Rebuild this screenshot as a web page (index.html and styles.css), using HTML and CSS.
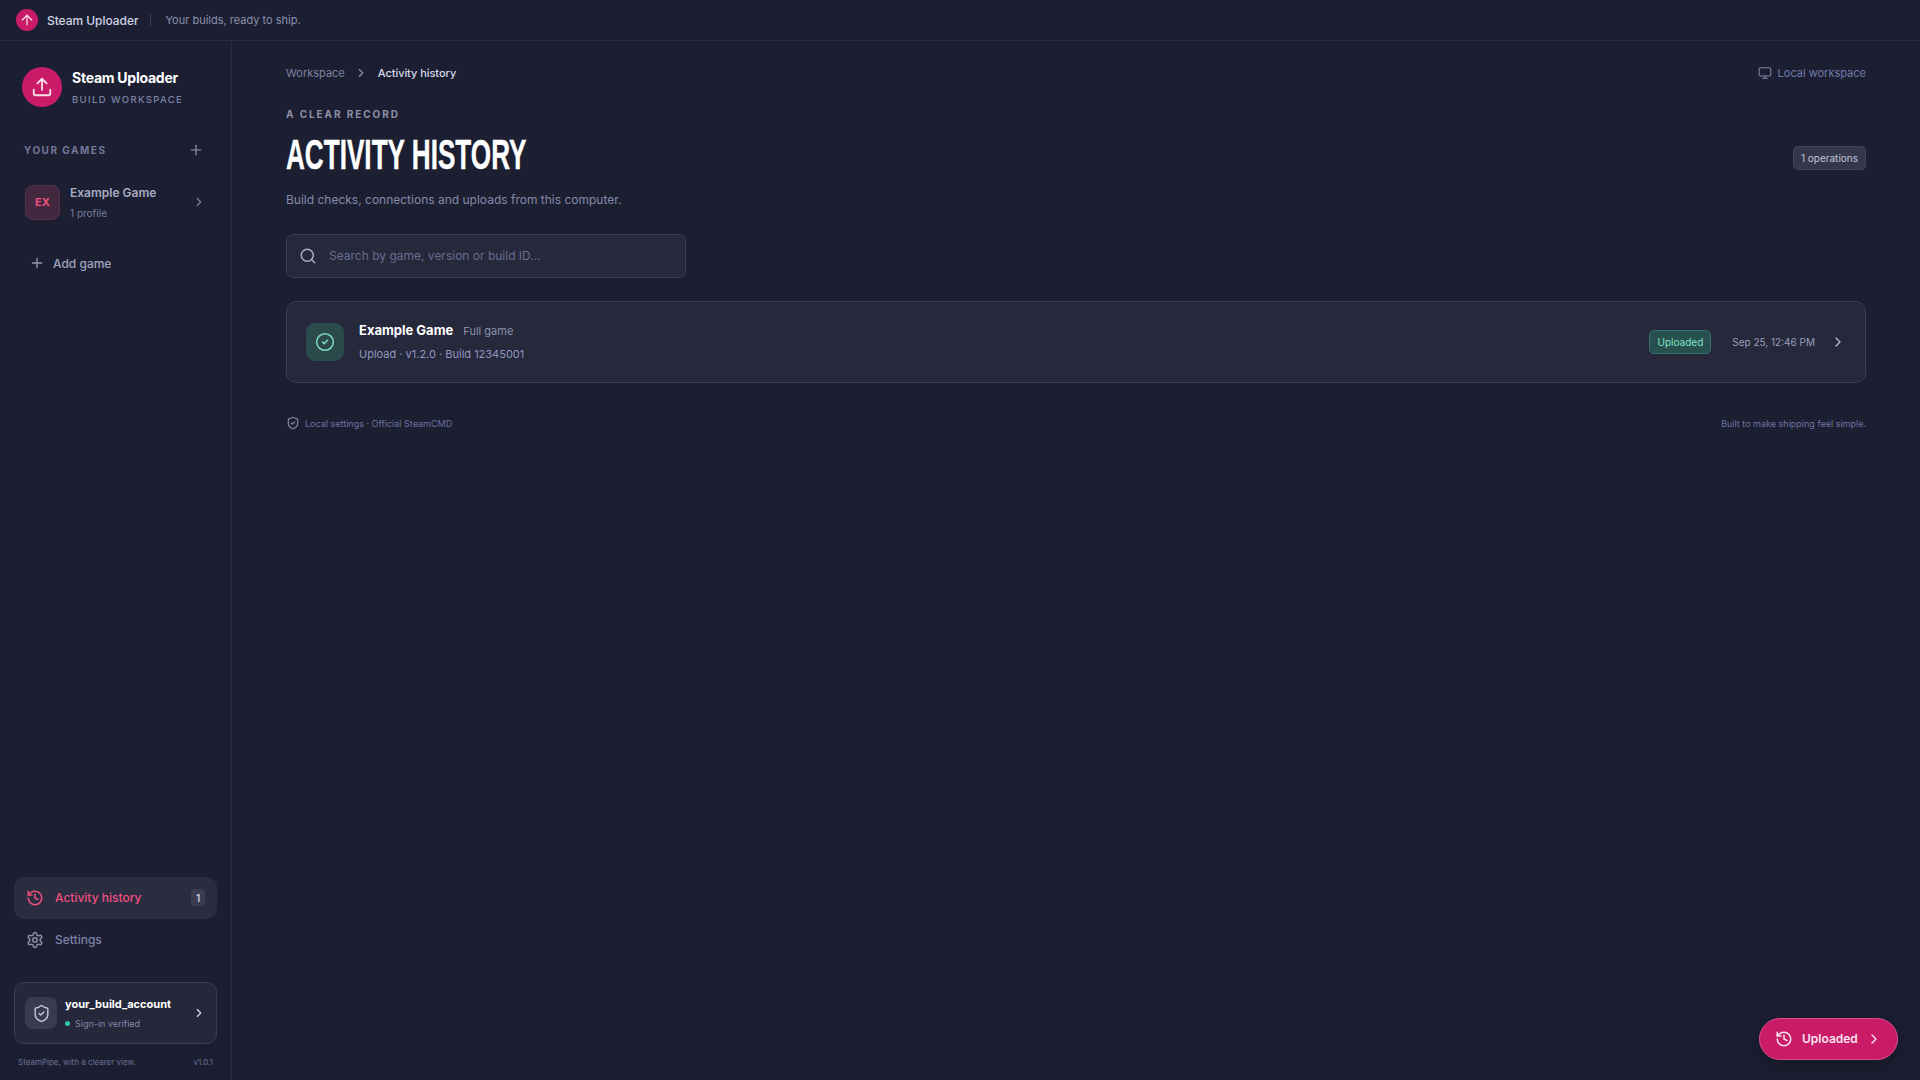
FILE: index.html
```html
<!DOCTYPE html>
<html lang="en">
<head>
<meta charset="utf-8">
<title>Steam Uploader</title>
<link rel="stylesheet" href="styles.css">
</head>
<body>
<svg class="defs" width="0" height="0" aria-hidden="true">
  <defs>
    <symbol id="i-chev" viewBox="0 0 24 24"><path d="m9 18 6-6-6-6"/></symbol>
    <symbol id="i-plus" viewBox="0 0 24 24"><path d="M5 12h14"/><path d="M12 5v14"/></symbol>
    <symbol id="i-history" viewBox="0 0 24 24"><path d="M3 12a9 9 0 1 0 9-9 9.75 9.75 0 0 0-6.74 2.74L3 8"/><path d="M3 3v5h5"/><path d="M12 7v5l4 2"/></symbol>
    <symbol id="i-shield" viewBox="0 0 24 24"><path d="M20 13c0 5-3.5 7.5-7.66 8.95a1 1 0 0 1-.67-.01C7.5 20.5 4 18 4 13V6a1 1 0 0 1 1-1c2 0 4.5-1.2 6.24-2.72a1.17 1.17 0 0 1 1.52 0C14.51 3.81 17 5 19 5a1 1 0 0 1 1 1z"/><path d="m9 12 2 2 4-4"/></symbol>
  </defs>
</svg>
<header class="topbar">
  <span class="top-logo"><svg class="ic" viewBox="0 0 24 24"><path d="m5 12 7-7 7 7"/><path d="M12 19V5"/></svg></span>
  <span class="top-name">Steam Uploader</span>
  <span class="top-sep"></span>
  <span class="top-tag">Your builds, ready to ship.</span>
</header>
<div class="shell">
  <aside class="sidebar">
    <div class="brand">
      <span class="brand-logo"><svg class="ic" viewBox="0 0 24 24"><path d="M21 15v4a2 2 0 0 1-2 2H5a2 2 0 0 1-2-2v-4"/><path d="m17 8-5-5-5 5"/><path d="M12 3v12"/></svg></span>
      <div class="brand-text">
        <div class="brand-name">Steam Uploader</div>
        <div class="brand-sub">BUILD WORKSPACE</div>
      </div>
    </div>
    <div class="games-head">
      <span class="games-title">YOUR GAMES</span>
      <svg class="ic games-plus"><use href="#i-plus"/></svg>
    </div>
    <div class="game">
      <span class="game-badge">EX</span>
      <div class="game-text">
        <div class="game-name">Example Game</div>
        <div class="game-sub">1 profile</div>
      </div>
      <svg class="ic game-chev"><use href="#i-chev"/></svg>
    </div>
    <div class="add-game">
      <svg class="ic add-plus"><use href="#i-plus"/></svg>
      <span>Add game</span>
    </div>
    <div class="spacer"></div>
    <nav class="nav">
      <div class="nav-item active">
        <svg class="ic nav-ic"><use href="#i-history"/></svg>
        <span class="nav-label">Activity history</span>
        <span class="nav-count">1</span>
      </div>
      <div class="nav-item">
        <svg class="ic nav-ic" viewBox="0 0 24 24"><path d="M12.22 2h-.44a2 2 0 0 0-2 2v.18a2 2 0 0 1-1 1.73l-.43.25a2 2 0 0 1-2 0l-.15-.08a2 2 0 0 0-2.73.73l-.22.38a2 2 0 0 0 .73 2.73l.15.1a2 2 0 0 1 1 1.72v.51a2 2 0 0 1-1 1.74l-.15.09a2 2 0 0 0-.73 2.73l.22.38a2 2 0 0 0 2.73.73l.15-.08a2 2 0 0 1 2 0l.43.25a2 2 0 0 1 1 1.73V20a2 2 0 0 0 2 2h.44a2 2 0 0 0 2-2v-.18a2 2 0 0 1 1-1.73l.43-.25a2 2 0 0 1 2 0l.15.08a2 2 0 0 0 2.73-.73l.22-.39a2 2 0 0 0-.73-2.73l-.15-.08a2 2 0 0 1-1-1.74v-.5a2 2 0 0 1 1-1.74l.15-.09a2 2 0 0 0 .73-2.73l-.22-.38a2 2 0 0 0-2.73-.73l-.15.08a2 2 0 0 1-2 0l-.43-.25a2 2 0 0 1-1-1.73V4a2 2 0 0 0-2-2z"/><circle cx="12" cy="12" r="3"/></svg>
        <span class="nav-label">Settings</span>
      </div>
    </nav>
    <div class="account">
      <span class="account-ic"><svg class="ic"><use href="#i-shield"/></svg></span>
      <div class="account-text">
        <div class="account-name">your_build_account</div>
        <div class="account-sub"><span class="dot"></span>Sign-in verified</div>
      </div>
      <svg class="ic account-chev"><use href="#i-chev"/></svg>
    </div>
    <div class="side-foot">
      <span>SteamPipe, with a clearer view.</span>
      <span>v1.0.1</span>
    </div>
  </aside>
  <main class="main">
    <div class="crumbs">
      <span class="crumb">Workspace</span>
      <svg class="ic crumb-chev"><use href="#i-chev"/></svg>
      <span class="crumb-now">Activity history</span>
      <span class="crumb-right">
        <svg class="ic monitor" viewBox="0 0 24 24"><rect width="20" height="14" x="2" y="3" rx="2"/><path d="M8 21h8"/><path d="M12 17v4"/></svg>
        Local workspace
      </span>
    </div>
    <div class="head">
      <div class="head-left">
        <div class="eyebrow">A CLEAR RECORD</div>
        <h1 class="title">ACTIVITY HISTORY</h1>
        <p class="lead">Build checks, connections and uploads from this computer.</p>
      </div>
      <span class="ops">1 operations</span>
    </div>
    <div class="search">
      <svg class="ic search-ic" viewBox="0 0 24 24"><circle cx="11" cy="11" r="8"/><path d="m21 21-4.3-4.3"/></svg>
      <span>Search by game, version or build ID...</span>
    </div>
    <article class="card">
      <span class="card-ic"><svg class="ic" viewBox="0 0 24 24"><circle cx="12" cy="12" r="10"/><path d="m9 12 2 2 4-4"/></svg></span>
      <div class="card-text">
        <div class="card-title"><strong>Example Game</strong><span>Full game</span></div>
        <div class="card-sub">Upload · v1.2.0 · Build 12345001</div>
      </div>
      <span class="status">Uploaded</span>
      <span class="date">Sep 25, 12:46 PM</span>
      <svg class="ic card-chev"><use href="#i-chev"/></svg>
    </article>
    <footer class="foot">
      <span class="foot-left"><svg class="ic foot-ic"><use href="#i-shield"/></svg>Local settings · Official SteamCMD</span>
      <span>Built to make shipping feel simple.</span>
    </footer>
  </main>
</div>
<button class="fab">
  <svg class="ic fab-ic"><use href="#i-history"/></svg>
  <span>Uploaded</span>
  <svg class="ic fab-chev"><use href="#i-chev"/></svg>
</button>
</body>
</html>
```
FILE: styles.css
```css
* { box-sizing: border-box; }
html, body { height: 100%; }
body {
  margin: 0;
  height: 1080px;
  overflow: hidden;
  background: #1c1f32;
  color: #fff;
  font-family: Inter, "Noto Sans", sans-serif;
}
.defs { position: absolute; }
.ic {
  display: block;
  fill: none;
  stroke: currentColor;
  stroke-width: 2;
  stroke-linecap: round;
  stroke-linejoin: round;
  flex: none;
}

/* top bar */
.topbar {
  height: 41px;
  display: flex;
  align-items: center;
  padding-left: 16px;
  border-bottom: 1px solid #2a2d42;
}
.top-logo {
  width: 22px; height: 22px;
  border-radius: 50%;
  background: #c91b68;
  color: #f6dbe7;
  display: flex; align-items: center; justify-content: center;
}
.top-logo .ic { width: 16px; height: 16px; }
.top-name { margin-left: 9px; font-size: 12px; font-weight: 500; color: #cfd3e6; letter-spacing: -0.05px; }
.top-sep { width: 1px; height: 12px; background: #3a3d55; margin: 0 14px 0 12px; }
.top-tag { font-size: 11px; color: #8a8fae; }

.shell { display: flex; height: 1039px; }

/* sidebar */
.sidebar {
  width: 232px;
  flex: none;
  border-right: 1px solid #2a2d42;
  display: flex;
  flex-direction: column;
  padding: 26px 14px 0;
}
.brand { display: flex; align-items: center; padding-left: 8px; }
.brand-logo {
  width: 40px; height: 40px;
  border-radius: 50%;
  background: #c91b68;
  color: #f8e0ea;
  display: flex; align-items: center; justify-content: center;
}
.brand-logo .ic { width: 22px; height: 22px; }
.brand-text { margin-left: 10px; }
.brand-name { font-size: 14px; font-weight: 700; line-height: 18px; letter-spacing: -0.25px; }
.brand-sub { margin-top: 7px; font-size: 9.5px; line-height: 12px; letter-spacing: 1.38px; color: #7d83a6; font-weight: 500; }

.games-head {
  margin-top: 35px;
  display: flex;
  align-items: center;
  justify-content: space-between;
  padding: 0 13px 0 10px;
  height: 16px;
}
.games-title { font-size: 10px; font-weight: 700; letter-spacing: 1.5px; color: #73789a; }
.games-plus { width: 16px; height: 16px; color: #9499b5; stroke-width: 1.8; }

.game { margin-top: 24px; display: flex; align-items: center; padding: 0 11px 0 11px; height: 40px; }
.game-badge {
  width: 35px; height: 35px;
  border-radius: 8px;
  background: #41283f;
  border: 1px solid #55304d;
  color: #f0527f;
  font-size: 11px; font-weight: 700;
  display: flex; align-items: center; justify-content: center;
}
.game-text { margin-left: 10px; flex: 1; padding-top: 1px; }
.game-name { font-size: 12px; font-weight: 600; line-height: 16px; color: #a7abc2; }
.game-sub { margin-top: 5px; font-size: 10px; line-height: 14px; color: #767c9e; }
.game-chev { width: 14px; height: 14px; color: #7f84a2; }

.add-game {
  margin-top: 32px;
  display: flex; align-items: center;
  padding-left: 15px;
  font-size: 12px; font-weight: 500;
  color: #a0a4bd;
  height: 18px;
}
.add-plus { width: 16px; height: 16px; margin-right: 8px; color: #9499b5; }

.spacer { flex: 1; }

.nav { display: flex; flex-direction: column; }
.nav-item {
  height: 42px;
  border-radius: 10px;
  display: flex; align-items: center;
  padding: 0 12px 1px 12px;
  font-size: 12px; font-weight: 500;
  color: #7d84a8;
}
.nav-item.active { background: #2a2c40; color: #ef4f7d; }
.nav-ic { width: 18px; height: 18px; margin-right: 11px; }
.nav-item:not(.active) .nav-ic { color: #8c90aa; }
.nav-label { flex: 1; }
.nav-count {
  width: 14px; height: 17px;
  border-radius: 4px;
  background: #3a3c52;
  color: #c6cadd;
  font-size: 10px; font-weight: 600;
  display: flex; align-items: center; justify-content: center;
}
.account {
  margin-top: 21px;
  height: 62px;
  border: 1px solid #3a3c52;
  border-radius: 10px;
  background: #25273a;
  display: flex; align-items: center;
  padding: 0 10px 0 10px;
}
.account-ic {
  width: 32px; height: 32px;
  border-radius: 8px;
  background: #393b4f;
  color: #c5c8d8;
  display: flex; align-items: center; justify-content: center;
}
.account-ic .ic { width: 19px; height: 19px; stroke-width: 1.8; }
.account-text { margin-left: 8px; flex: 1; }
.account-name { font-size: 11px; font-weight: 700; line-height: 14px; }
.account-sub { margin-top: 7px; font-size: 9px; line-height: 12px; color: #8288aa; display: flex; align-items: center; }
.dot { width: 5px; height: 5px; border-radius: 50%; background: #2dc9a0; margin-right: 5px; }
.account-chev { width: 14px; height: 14px; color: #d7d9e6; }
.side-foot {
  margin: 11px 4px 10px;
  height: 15px;
  display: flex;
  justify-content: space-between;
  font-size: 8px;
  line-height: 15px;
  color: #6a7094;
}

/* main */
.main { flex: 1; padding: 13px 54px 0; min-width: 0; }
.crumbs { height: 38px; display: flex; align-items: center; font-size: 11px; }
.crumb { color: #7d82a2; }
.crumb-chev { width: 14px; height: 14px; margin: 0 10px 0 9px; color: #8a8fae; }
.crumb-now { color: #d7daea; font-weight: 500; letter-spacing: -0.05px; }
.crumb-right { margin-left: auto; display: flex; align-items: center; color: #6f7ba8; }
.monitor { width: 14px; height: 14px; margin-right: 6px; color: #8088a8; stroke-width: 1.8; }

.head { display: flex; align-items: flex-start; justify-content: space-between; margin-top: 15px; }
.eyebrow { font-size: 10px; font-weight: 700; letter-spacing: 1.92px; line-height: 14px; color: #8e90a8; }
.title {
  margin: 13px 0 0;
  font-family: "Liberation Sans", sans-serif;
  font-size: 42px;
  line-height: 42px;
  font-weight: 700;
  transform: scaleX(.622);
  transform-origin: left center;
  white-space: nowrap;
  -webkit-text-stroke: .4px #fff;
}
.lead { margin: 15px 0 0; font-size: 12px; line-height: 18px; color: #848aa8; }
.ops {
  margin-top: 39px;
  height: 24px;
  padding: 0 7px;
  border-radius: 5px;
  background: #34364b;
  border: 1px solid #42445a;
  font-size: 10px;
  line-height: 22px;
  color: #c1c4d8;
}

.search {
  margin-top: 25px;
  width: 400px;
  height: 44px;
  border: 1px solid #3a3c52;
  border-radius: 7px;
  background: #26283c;
  display: flex; align-items: center;
  padding: 0 0 1px 12px;
  font-size: 12px;
  color: #686e8e;
}
.search-ic { width: 18px; height: 18px; margin-right: 12px; color: #a9adc2; }

.card {
  margin-top: 23px;
  height: 82px;
  border: 1px solid #3a3c52;
  border-radius: 10px;
  background: #26283c;
  display: flex; align-items: center;
  padding: 0 19px 0 19px;
}
.card-ic {
  width: 38px; height: 38px;
  border-radius: 9px;
  background: #2a4a4b;
  color: #7fdcc0;
  display: flex; align-items: center; justify-content: center;
}
.card-ic .ic { width: 20px; height: 20px; stroke-width: 1.8; }
.card-text { margin: 0 0 2px 15px; flex: 1; }
.card-title { display: flex; align-items: baseline; }
.card-title strong { font-size: 13px; font-weight: 700; line-height: 18px; }
.card-title span { margin-left: 10px; font-size: 11px; color: #8d90aa; }
.card-sub { margin-top: 8px; font-size: 11px; line-height: 15px; color: #9197c0; }
.status {
  height: 24px;
  padding: 0 7px;
  border-radius: 5px;
  background: #28504f;
  border: 1px solid #33726a;
  color: #7fe3c3;
  font-size: 10px;
  line-height: 22px;
}
.date { margin-left: 21px; font-size: 10px; color: #9a9eba; }
.card-chev { margin-left: 15px; width: 16px; height: 16px; color: #b5b8cc; }

.foot {
  margin-top: 32px;
  display: flex; justify-content: space-between; align-items: center;
  font-size: 9px;
  color: #6c74a0;
  height: 16px;
}
.foot-left { display: flex; align-items: center; }
.foot-ic { width: 14px; height: 14px; margin-right: 5px; color: #8388a2; }

/* floating button */
.fab {
  position: absolute;
  right: 22px;
  bottom: 20px;
  width: 139px;
  height: 42px;
  border-radius: 21px;
  background: #c91b68;
  border: 1px solid #dc4b8c;
  box-shadow: 0 6px 20px rgba(0,0,0,.25);
  color: #f9e4ed;
  font: 600 12px Inter, sans-serif;
  display: flex; align-items: center;
  padding: 0 0 1px 15px;
}
.fab-ic { width: 18px; height: 18px; margin-right: 9px; }
.fab-chev { width: 16px; height: 16px; margin-left: 8px; }
```
